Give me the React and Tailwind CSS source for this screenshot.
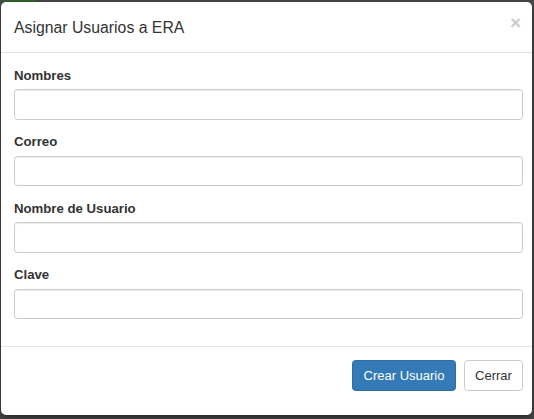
// Modal "Asignar Usuarios a ERA" over a dimmed page
const fields = ['Nombres', 'Correo', 'Nombre de Usuario', 'Clave'];

export default function App() {
  return (
    <div className="w-[534px] h-[419px] bg-[#4a4a4a] overflow-hidden font-['Liberation_Sans',Arial,sans-serif] text-[#333]">
      {/* backdrop hint of the page behind */}
      <div className="h-[2px] flex">
        <div className="ml-[3px] w-[33px] h-[2px] bg-[#2f5e2a]" />
      </div>

      <div className="ml-[1px] w-[531px] h-[413px] bg-white rounded-[5px] shadow-[0_3px_9px_rgba(0,0,0,0.5)] flex flex-col">
        {/* Header */}
        <div className="h-[51px] border-b border-[#e5e5e5] flex items-center justify-between pl-[13px] pr-[11px] shrink-0">
          <h4 className="text-[15.8px] leading-[23px]">Asignar Usuarios a ERA</h4>
          <button className="-mt-[9px] text-[19px] font-bold leading-none text-black opacity-20">×</button>
        </div>

        {/* Body */}
        <div className="pt-[13.5px] pl-[13px] pr-[9px] pb-[13.5px] shrink-0">
          {fields.map((f) => (
            <div key={f} className="mb-[13.5px]">
              <label className="block text-[13.2px] leading-[18px] font-bold mb-[4.5px]">{f}</label>
              <input
                type="text"
                className="block w-full h-[30.6px] border border-[#ccc] rounded-[3.5px] bg-white shadow-[inset_0_1px_1px_rgba(0,0,0,0.075)] px-[11px] text-[12.6px] outline-none"
              />
            </div>
          ))}
        </div>

        {/* Footer */}
        <div className="flex-1 border-t border-[#e5e5e5] pt-[13px] pr-[9px] flex justify-end items-start gap-[8px]">
          <button className="h-[31px] w-[104px] rounded-[3.5px] bg-[#337ab7] border border-[#2e6da4] text-white text-[13px]">
            Crear Usuario
          </button>
          <button className="h-[31px] w-[59px] rounded-[3.5px] bg-white border border-[#ccc] text-[#333] text-[13px]">
            Cerrar
          </button>
        </div>
      </div>
    </div>
  );
}
